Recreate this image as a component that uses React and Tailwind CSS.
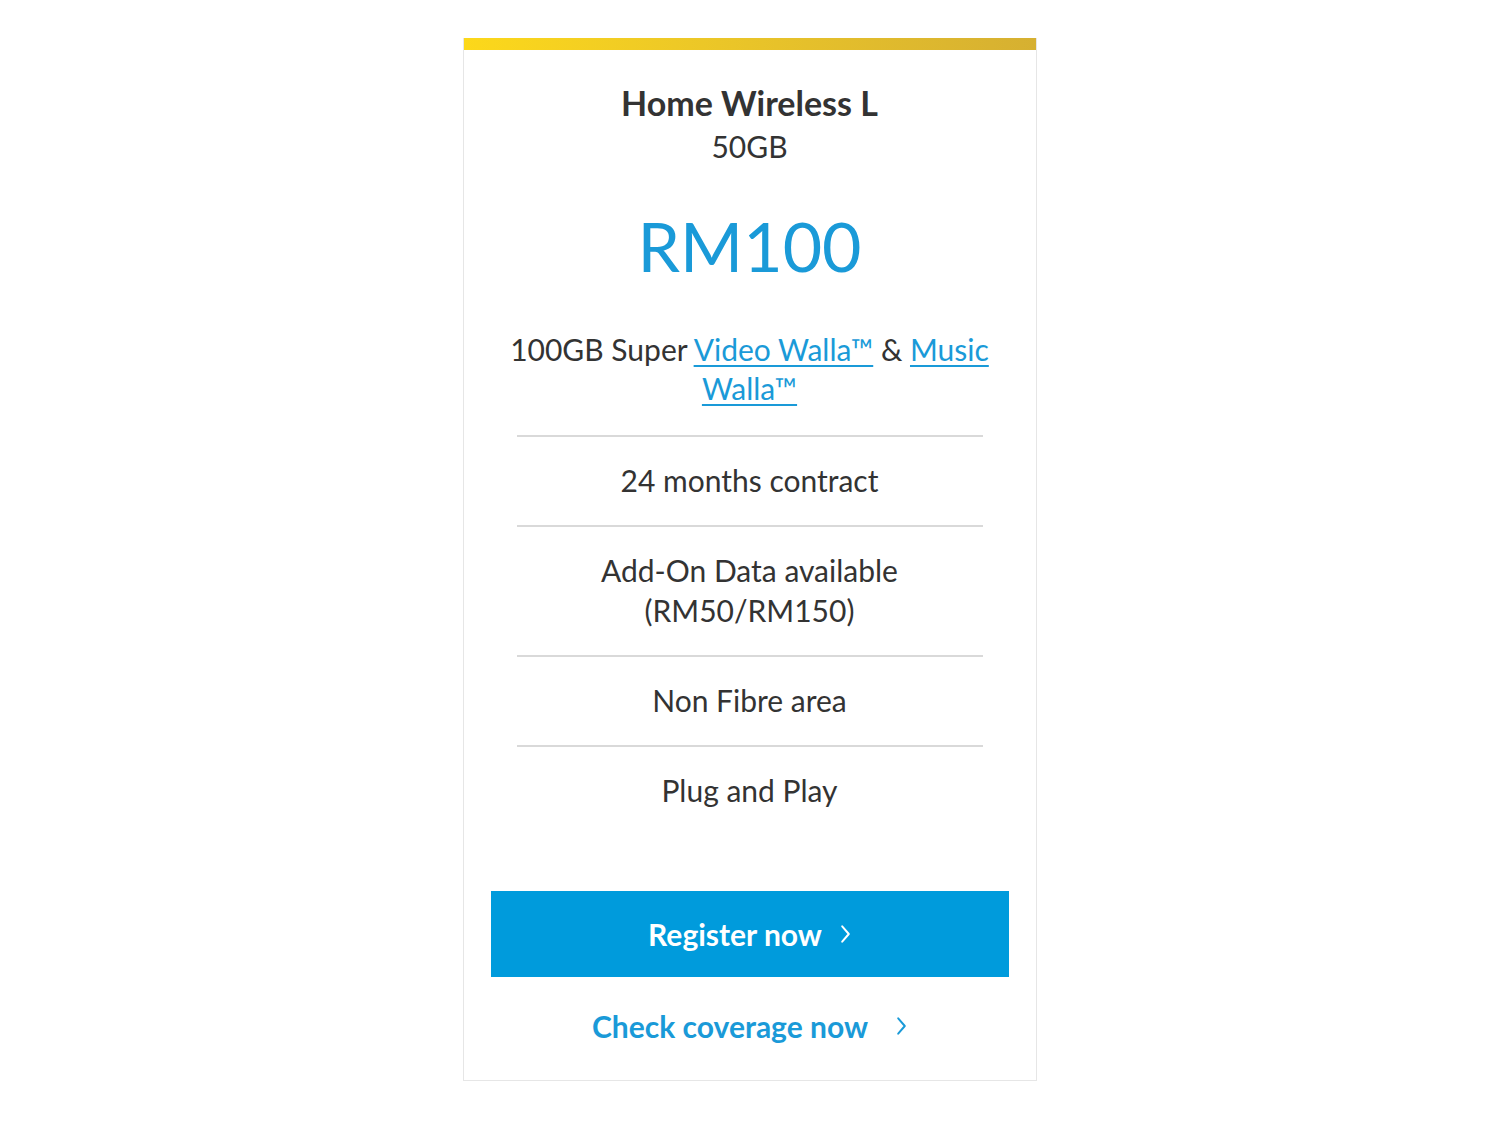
import React from "react";

const features = [
  ["24 months contract"],
  ["Add-On Data available", "(RM50/RM150)"],
  ["Non Fibre area"],
];

const Chevron = ({ className }) => (
  <svg className={className} viewBox="0 0 10 18" fill="none" stroke="currentColor" strokeWidth={1.8} strokeLinecap="round" strokeLinejoin="round">
    <path d="M2 2l6 7-6 7" />
  </svg>
);

const App = () => {
  return (
    <div className="min-h-[1124px] w-full bg-white pt-[38px] font-['Lato','Liberation_Sans',sans-serif] text-[#333]">
      <div className="mx-auto w-[574px] border-x border-b border-[#e6e6e6] bg-white">
        {/* top accent */}
        <div className="h-[12px] bg-gradient-to-r from-[#fcd81a] to-[#d6b031]" />

        <div className="px-[27px] pt-[32px] pb-[36px] text-center">
          <h2 className="text-[34px] font-bold leading-[42px] text-[#333]">Home Wireless L</h2>
          <p className="mt-[2px] text-[30px] leading-[40px]">50GB</p>

          <p className="mt-[38px] text-[68px] leading-[84px] text-[#1a9ad8]">RM100</p>

          <p className="mt-[42px] text-[30px] leading-[39px]">
            100GB Super{" "}
            <a href="#" className="text-[#1a9ad8] underline decoration-2 underline-offset-4">Video Walla™</a>{" "}
            &amp;{" "}
            <a href="#" className="text-[#1a9ad8] underline decoration-2 underline-offset-4">Music Walla™</a>
          </p>

          <div className="mx-[26px] mt-[27px]">
            {features.map((lines, i) => (
              <div key={i} className="border-t-2 border-[#d9d9d9] pt-[24px] pb-[25px] text-[30px] leading-[39px]">
                {lines.map((l) => (
                  <div key={l} className="leading-[40px] first:leading-[39px]">{l}</div>
                ))}
              </div>
            ))}
            <div className="border-t-2 border-[#d9d9d9] pt-[24px] text-[30px] leading-[39px]">Plug and Play</div>
          </div>

          <button className="mt-[81px] flex h-[86px] w-full items-center justify-center gap-[18px] bg-[#009bdc] text-[30px] font-bold text-white">
            Register now
            <Chevron className="h-[20px] w-[11px]" />
          </button>

          <a href="#" className="mt-[31px] flex items-center justify-center gap-[28px] text-[30px] font-bold leading-[36px] text-[#1a9ad8]">
            Check coverage now
            <Chevron className="h-[20px] w-[11px]" />
          </a>
        </div>
      </div>
    </div>
  );
};

export default App;
